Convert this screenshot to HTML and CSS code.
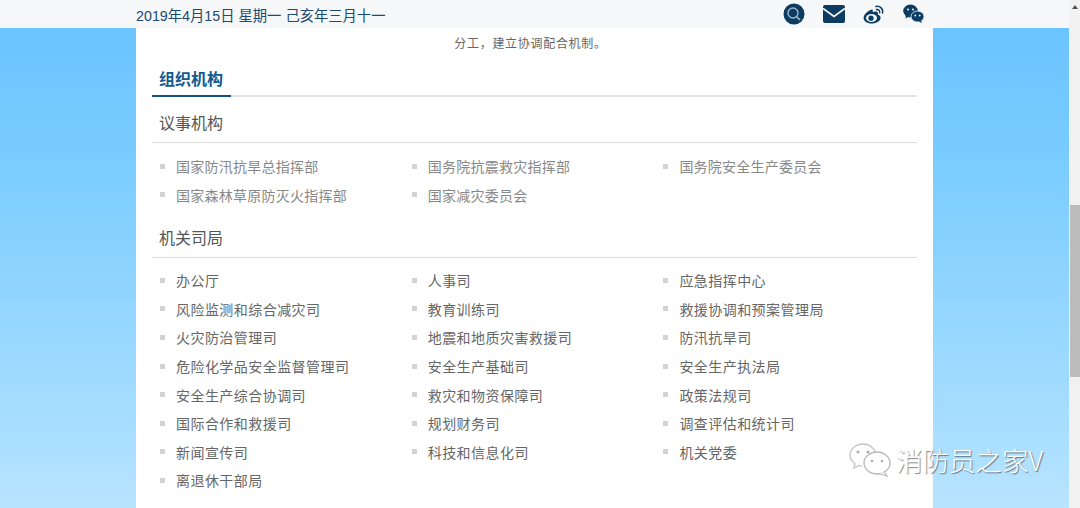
FILE: index.html
```html
<!DOCTYPE html>
<html lang="zh">
<head>
<meta charset="utf-8">
<title>组织机构</title>
<link rel="stylesheet" href="styles.css">
</head>
<body>
<div class="window">
  <div class="page">
    <header class="topbar">
      <span class="date">2019年4月15日 星期一 己亥年三月十一</span>
      <div class="icons">
        <svg class="ico" width="22" height="22" viewBox="0 0 22 22"><circle cx="11" cy="11" r="10.5" fill="#0d3c63"/><circle cx="10" cy="10" r="5" fill="none" stroke="#9fb6c8" stroke-width="1.4"/><path d="M13.6 13.6l3.4 3.4" stroke="#9fb6c8" stroke-width="1.6"/></svg>
        <svg class="ico" width="22" height="18" viewBox="0 0 22 18"><rect width="22" height="18" rx="2" fill="#0d3c63"/><path d="M0 3.5l11 8 11-8" fill="none" stroke="#f5f7f9" stroke-width="1.8"/></svg>
        <svg class="ico" width="22" height="20" viewBox="0 0 22 20"><path d="M9 5.5C5 6.5.6 10.5.6 14c0 3.4 4 5.5 8 5.5 5 0 9-2.8 9-5.800 0-1.800-1.500-2.700-2.800-3 .8-2-.2-3.300-2-3.300-1 0-2 .4-3 .9 .3-1.400 0-2.800-.8-2.800z" fill="#0d3c63"/><ellipse cx="8.500" cy="14" rx="5.500" ry="4" fill="#f5f7f9"/><circle cx="8" cy="14.200" r="2.600" fill="#0d3c63"/><path d="M13 2.500c4-1 7.500 2.500 6.500 6.500M13.500 5.500c2-.4 3.600 1.200 3.200 3.200" fill="none" stroke="#0d3c63" stroke-width="1.500" stroke-linecap="round"/></svg>
        <svg class="ico" width="22" height="20" viewBox="0 0 22 20"><ellipse cx="7.500" cy="7" rx="7.300" ry="6.500" fill="#0d3c63"/><path d="M3 11l-.5 3.500 3.500-2z" fill="#0d3c63"/><ellipse cx="14.500" cy="12.500" rx="6.500" ry="5.500" stroke="#f5f7f9" stroke-width=".8" fill="#0d3c63"/><path d="M18 16l.8 3-3-1.500z" fill="#0d3c63"/><circle cx="5" cy="5.500" r="1" fill="#f5f7f9"/><circle cx="10" cy="5.500" r="1" fill="#f5f7f9"/><circle cx="12.300" cy="11.500" r=".9" fill="#f5f7f9"/><circle cx="16.700" cy="11.500" r=".9" fill="#f5f7f9"/></svg>
      </div>
    </header>
    <main class="backdrop">
      <div class="sheet">
        <p class="lead">分工，建立协调配合机制。</p>
        <div class="tabline"><h2 class="tab">组织机构</h2></div>
        <h3 class="subhead">议事机构</h3>
        <ul class="grid muted">
          <li>国家防汛抗旱总指挥部</li>
          <li>国务院抗震救灾指挥部</li>
          <li>国务院安全生产委员会</li>
          <li>国家森林草原防灭火指挥部</li>
          <li>国家减灾委员会</li>
        </ul>
        <h3 class="subhead">机关司局</h3>
        <ul class="grid">
          <li>办公厅</li>
          <li>人事司</li>
          <li>应急指挥中心</li>
          <li>风险监测和综合减灾司</li>
          <li>教育训练司</li>
          <li>救援协调和预案管理局</li>
          <li>火灾防治管理司</li>
          <li>地震和地质灾害救援司</li>
          <li>防汛抗旱司</li>
          <li>危险化学品安全监督管理司</li>
          <li>安全生产基础司</li>
          <li>安全生产执法局</li>
          <li>安全生产综合协调司</li>
          <li>救灾和物资保障司</li>
          <li>政策法规司</li>
          <li>国际合作和救援司</li>
          <li>规划财务司</li>
          <li>调查评估和统计司</li>
          <li>新闻宣传司</li>
          <li>科技和信息化司</li>
          <li>机关党委</li>
          <li>离退休干部局</li>
        </ul>
      </div>
    </main>
  </div>
  <div class="scrollbar">
    <span class="arrow"></span>
    <span class="thumb"></span>
  </div>
  <div class="watermark">
    <svg width="44" height="34" viewBox="0 0 44 34" class="wm-icon"><path d="M14 1C7 1 1 6 1 12c0 3.500 2 6.500 5 8.500L5 25l5-2.500c1 .3 2 .4 3 .5" fill="#fff" fill-opacity=".5" stroke="#c4c4c4" stroke-width="1.300"/><path d="M14 1c6 0 11 3.500 12.500 8.500" fill="none" stroke="#c4c4c4" stroke-width="1.300"/><ellipse cx="28" cy="20" rx="13" ry="11" fill="#fff" fill-opacity=".55" stroke="#b8b8b8" stroke-width="1.300"/><path d="M35 29l3 4-8-2.500" fill="#fff" stroke="#b8b8b8" stroke-width="1.200"/><circle cx="9" cy="9" r="1.500" fill="#aaa"/><circle cx="19" cy="9" r="1.500" fill="#aaa"/><circle cx="23" cy="18" r="1.300" fill="#aaa"/><circle cx="33" cy="18" r="1.300" fill="#aaa"/></svg>
    <span class="wm-text">消防员之家V</span>
  </div>
</div>
</body>
</html>
```
FILE: styles.css
```css
* { box-sizing: border-box; }
html, body { margin: 0; height: 100%; overflow: hidden; }
body { font-family: "Liberation Sans", "Noto Sans CJK SC", sans-serif; background: #fff; }
.window { display: flex; position: relative; height: 508px; width: 1080px; overflow: hidden; }
.page { width: 1069px; display: flex; flex-direction: column; }
.topbar { height: 28px; flex: none; background: #f5f7f9; display: flex; justify-content: space-between; align-items: center; padding: 0 144px 0 136px; }
.date { font-size: 14.3px; color: #1d4a70; white-space: nowrap; }
.icons { display: flex; align-items: center; gap: 18px; }
.ico { display: block; }
.backdrop { flex: 1; background: linear-gradient(#6bc4ff 0, #79ccff 130px, #a8deff 400px, #b8e4ff 480px); padding: 0 136px; overflow: hidden; }
.sheet { background: #fff; height: 100%; padding: 0 16px; }
.lead { margin: 0; padding: 8px 8px 0 0; height: 38px; font-size: 12px; line-height: 16px; color: #666; text-align: center; letter-spacing: .7px; }
.tabline { border-bottom: 2px solid #e2e4e6; height: 31px; }
.tab { margin: 0; display: inline-block; height: 31px; width: 79px; padding-left: 7px; font-size: 16px; line-height: 28px; font-weight: 700; color: #105a8f; border-bottom: 2px solid #15527f; white-space: nowrap; }
.subhead { margin: 0; height: 46px; padding: 17px 7px 0; font-size: 16px; font-weight: 400; line-height: 20px; color: #555; border-bottom: 1px solid #dedede; }
.grid { list-style: none; margin: 0; padding: 8px 8px 0 8px; display: grid; grid-template-columns: 251.7px 251.7px 1fr; grid-auto-rows: 28.6px; font-size: 14px; color: #666; letter-spacing: .45px; }
.grid.muted { color: #888; height: 69px; padding-top: 9px; letter-spacing: .25px; }
.grid li { display: flex; align-items: center; gap: 11px; white-space: nowrap; }
.grid li::before { content: ""; width: 5px; height: 5px; background: #d3d3d3; flex: none; }
.scrollbar { width: 11px; background: #f1f1f1; flex: none; display: flex; flex-direction: column; align-items: center; }
.arrow { margin-top: 5px; width: 0; height: 0; border-left: 3px solid transparent; border-right: 3px solid transparent; border-bottom: 4px solid #505050; }
.thumb { margin-top: 196px; width: 10px; height: 172px; background: #bcbcbc; }
.watermark { position: absolute; left: 849px; top: 442px; display: flex; align-items: center; gap: 3px; }
.wm-text { font-size: 26.5px; line-height: 36px; color: #fff; font-family: "Noto Sans CJK SC", sans-serif; font-weight: 300; text-shadow: 1px 1px 1px rgba(70,70,70,.7); white-space: nowrap; }
```
